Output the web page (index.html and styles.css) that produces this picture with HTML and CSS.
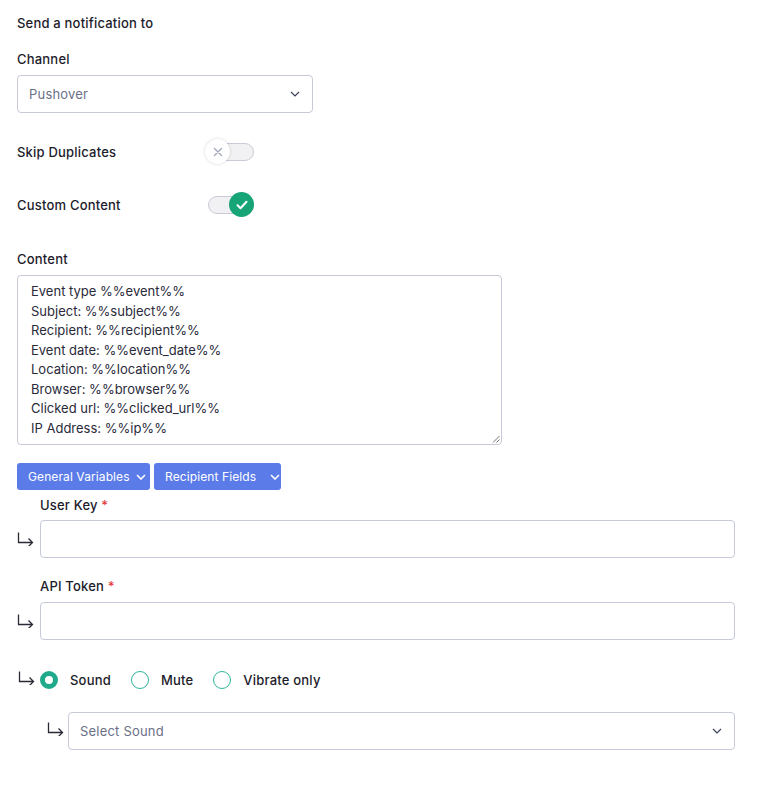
FILE: index.html
```html
<!DOCTYPE html>
<html>
<head>
<meta charset="utf-8">
<link rel="stylesheet" href="styles.css">
</head>
<body>
<div class="page">
  <div class="title">Send a notification to</div>

  <div class="label ch-label">Channel</div>
  <div class="select channel">
    <span class="val">Pushover</span>
    <svg class="chev" width="10" height="6" viewBox="0 0 10 6"><path d="M1 1l4 4 4-4" fill="none" stroke="#3a3f5c" stroke-width="1.2"/></svg>
  </div>

  <div class="toggle-row skip">
    <span class="label">Skip Duplicates</span>
    <span class="toggle off">
      <span class="track"></span>
      <span class="knob"><svg width="10" height="10" viewBox="0 0 10 10"><path d="M1.5 1.5l7 7M8.5 1.5l-7 7" stroke="#a3a7be" stroke-width="1.4" stroke-linecap="round"/></svg></span>
    </span>
  </div>

  <div class="toggle-row custom">
    <span class="label">Custom Content</span>
    <span class="toggle on">
      <span class="track"></span>
      <span class="knob"><svg width="12" height="10" viewBox="0 0 12 10"><path d="M1.5 5.2l3 3 6-6.5" fill="none" stroke="#fff" stroke-width="2" stroke-linecap="round" stroke-linejoin="round"/></svg></span>
    </span>
  </div>

  <div class="label content-label">Content</div>
  <div class="textarea">
    <div>Event type %%event%%</div>
    <div>Subject: %%subject%%</div>
    <div>Recipient: %%recipient%%</div>
    <div>Event date: %%event_date%%</div>
    <div>Location: %%location%%</div>
    <div>Browser: %%browser%%</div>
    <div>Clicked url: %%clicked_url%%</div>
    <div>IP Address: %%ip%%</div>
    <svg class="grip" width="8" height="8" viewBox="0 0 8 8"><path d="M7.5 1L1 7.5M7.5 4.5L4.5 7.5" stroke="#777" stroke-width="1"/></svg>
  </div>

  <div class="btns">
    <span class="btn b1">General Variables <svg width="10" height="6" viewBox="0 0 10 6"><path d="M1 1l4 4 4-4" fill="none" stroke="#fff" stroke-width="1.6"/></svg></span>
    <span class="btn b2">Recipient Fields <svg width="10" height="6" viewBox="0 0 10 6"><path d="M1 1l4 4 4-4" fill="none" stroke="#fff" stroke-width="1.6"/></svg></span>
  </div>

  <div class="field userkey">
    <div class="label flabel">User Key <span class="req">*</span></div>
    <div class="frow">
      <svg class="arrow" width="17" height="14" viewBox="0 0 17 14"><path d="M1.5 0.5v10h14M11.5 6.5l4 4-4 4" fill="none" stroke="#2a2a36" stroke-width="1.3"/></svg>
      <div class="input"></div>
    </div>
  </div>

  <div class="field apitoken">
    <div class="label flabel">API Token <span class="req">*</span></div>
    <div class="frow">
      <svg class="arrow" width="17" height="14" viewBox="0 0 17 14"><path d="M1.5 0.5v10h14M11.5 6.5l4 4-4 4" fill="none" stroke="#2a2a36" stroke-width="1.3"/></svg>
      <div class="input"></div>
    </div>
  </div>

  <div class="radios">
    <svg class="arrow" width="17" height="14" viewBox="0 0 17 14"><path d="M1.5 0.5v10h14M11.5 6.5l4 4-4 4" fill="none" stroke="#2a2a36" stroke-width="1.3"/></svg>
    <span class="radio checked"></span><span class="rlabel">Sound</span>
    <span class="radio"></span><span class="rlabel">Mute</span>
    <span class="radio"></span><span class="rlabel">Vibrate only</span>
  </div>

  <div class="soundrow">
    <svg class="arrow" width="17" height="14" viewBox="0 0 17 14"><path d="M1.5 0.5v10h14M11.5 6.5l4 4-4 4" fill="none" stroke="#2a2a36" stroke-width="1.3"/></svg>
    <div class="select sound">
      <span class="val">Select Sound</span>
      <svg class="chev" width="10" height="6" viewBox="0 0 10 6"><path d="M1 1l4 4 4-4" fill="none" stroke="#3a3f5c" stroke-width="1.2"/></svg>
    </div>
  </div>
</div>
</body>
</html>
```

FILE: styles.css
```css
html, body {
  margin: 0;
  padding: 0;
  background: #fff;
}
body {
  font-family: Inter, "Open Sans", sans-serif;
  font-size: 13px;
  letter-spacing: 0.2px;
  color: #1c1c2b;
}
.page {
  padding: 14px 27px 0 17px;
  width: 718px;
}
.title {
  font-weight: 500;
  line-height: 18px;
}
.label {
  font-weight: 500;
  line-height: 18px;
}
.ch-label {
  margin-top: 18px;
}
.select {
  box-sizing: border-box;
  height: 38px;
  border: 1px solid #c6cad8;
  border-radius: 4px;
  display: flex;
  align-items: center;
  justify-content: space-between;
  padding: 0 12px 0 11px;
  color: #6b7087;
}
.channel {
  margin-top: 7px;
  width: 296px;
}
.toggle-row {
  display: flex;
  align-items: center;
  height: 26px;
}
.toggle-row .label {
  width: 190px;
}
.skip { margin-top: 26px; }
.custom { margin-top: 27px; }
.toggle {
  position: relative;
  width: 50px;
  height: 26px;
  display: inline-block;
}
.toggle .track {
  position: absolute;
  left: 1px;
  top: 4px;
  width: 44px;
  height: 16px;
  border: 1px solid #c9ccd8;
  border-radius: 9px;
  background: #f1f1f4;
}
.toggle .knob {
  position: absolute;
  top: 0;
  width: 25px;
  height: 25px;
  border-radius: 50%;
  display: flex;
  align-items: center;
  justify-content: center;
}
.toggle.off .knob {
  left: -2px;
  background: #fff;
  box-shadow: 0 0 3px rgba(0,0,0,0.18);
}
.toggle.on .knob {
  left: 22px;
  background: #17a578;
}
.content-label {
  margin-top: 32px;
}
.textarea {
  position: relative;
  box-sizing: border-box;
  margin-top: 7px;
  width: 485px;
  height: 170px;
  border: 1px solid #c6cad8;
  border-radius: 4px;
  padding: 6px 13px;
  line-height: 19.5px;
  letter-spacing: 0;
  color: #2a2a3a;
}
.grip {
  position: absolute;
  right: 1px;
  bottom: 1px;
}
.btns {
  display: flex;
  gap: 4px;
  margin-top: 18px;
}
.btn {
  box-sizing: border-box;
  height: 27px;
  background: #5b7ce8;
  color: #fff;
  border-radius: 3px;
  display: flex;
  align-items: center;
  font-size: 12px;
  letter-spacing: 0.1px;
  padding: 0 0 0 11px;
  gap: 6px;
  white-space: nowrap;
}
.b1 { width: 133px; }
.b2 { width: 127px; gap: 14px; }
.field .flabel {
  margin-left: 23px;
}
.userkey { margin-top: 6px; }
.apitoken { margin-top: 19px; }
.req { color: #e23b3b; }
.frow {
  display: flex;
  align-items: center;
  margin-top: 6px;
}
.apitoken .frow { margin-top: 7px; }
.arrow {
  flex: none;
  width: 17px;
  margin-right: 6px;
}
.input {
  flex: 1;
  height: 38px;
  box-sizing: border-box;
  border: 1px solid #c6cad8;
  border-radius: 4px;
}
.radios {
  display: flex;
  align-items: center;
  margin-top: 30px;
  margin-left: 1px;
  height: 20px;
}
.radios .arrow {
  margin-right: 5px;
  margin-top: -4px;
}
.radio {
  box-sizing: border-box;
  width: 18px;
  height: 18px;
  border-radius: 50%;
  border: 1.5px solid #2fb59a;
  flex: none;
}
.radio.checked {
  border: 5.5px solid #20aa8c;
  background: #fff;
}
.rlabel {
  font-weight: 500;
  margin-left: 12px;
  margin-right: 20px;
}
.soundrow {
  display: flex;
  align-items: center;
  margin-top: 22px;
  margin-left: 30px;
}
.soundrow .arrow {
  margin-right: 4px;
  margin-top: -4px;
}
.sound {
  flex: 1;
}
```
